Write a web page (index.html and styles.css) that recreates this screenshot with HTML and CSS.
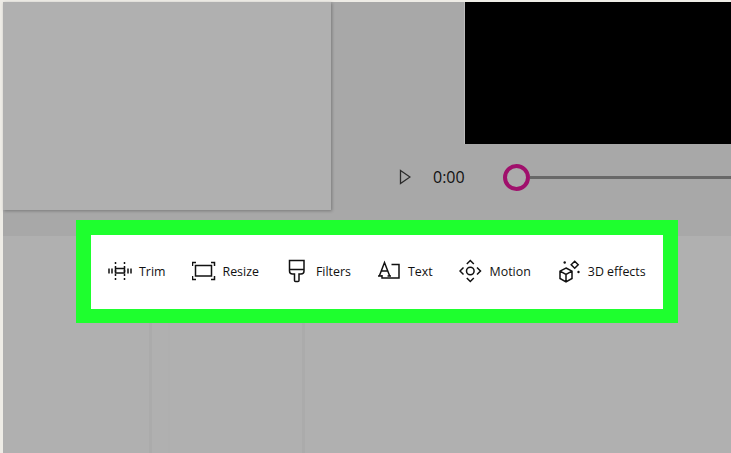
FILE: index.html
```html
<!DOCTYPE html>
<html lang="en">
<head>
<meta charset="utf-8">
<title>Video editor</title>
<link rel="stylesheet" href="styles.css">
</head>
<body>
<main class="app">
  <section class="stage">
    <div class="card"></div>
    <div class="player">
      <div class="video"></div>
      <div class="controls">
        <svg class="play" width="12" height="16" viewBox="0 0 12 16"><path d="M1.500 1.500 11 8 1.500 14.500Z"/></svg>
        <span class="time">0:00</span>
        <div class="slider"><span class="thumb"></span><span class="track"></span></div>
      </div>
    </div>
  </section>
  <section class="timeline">
    <div class="col col-a"></div>
    <div class="col col-b"></div>
    <div class="col col-c"></div>
  </section>
  <nav class="highlight">
    <div class="toolbar">
      <div class="tool">
        <svg class="icon" viewBox="0 0 24 24"><path d="M1 9.500v5M4 9.500v5M20 9.500v5M23 9.500v5M7.500 9.500h9v4.500h-9z"/><path class="dash" d="M7.500 3v18M16.500 3v18"/></svg>
        <span>Trim</span>
      </div>
      <div class="tool">
        <svg class="icon" viewBox="0 0 24 24"><path d="M3.500 6.500h16v10.500h-16zM.5 7V3.500H4M19 3.500h3.500V7M22.500 17v3.500H19M4 20.500H.5V17"/></svg>
        <span>Resize</span>
      </div>
      <div class="tool">
        <svg class="icon" viewBox="0 0 24 24"><path d="M4.500 1.500h14.500v10.500c0 2-1.500 3-3 3h-2v6.500a1 1 0 0 1-1 1h-2.500a1 1 0 0 1-1-1V15h-2c-1.500 0-3-1-3-3zM4.500 10.500h14.500"/></svg>
        <span>Filters</span>
      </div>
      <div class="tool">
        <svg class="icon" viewBox="0 0 24 24"><path d="M2.500 16.500 7.500 3.500 12.500 16.500M4.500 12h6M1 17h3.500M10.500 17h3.500M14.500 5.500h7.500v13.500H5v-3"/></svg>
        <span>Text</span>
      </div>
      <div class="tool">
        <svg class="icon" viewBox="0 0 24 24"><circle cx="11.300" cy="12" r="3.800"/><path d="M4.500 8.500 1 12l3.500 3.500M18 8.500l3.500 3.500-3.500 3.500M7.800 5l3.500-3.500L14.800 5M7.800 19l3.500 3.500 3.500-3.500"/></svg>
        <span>Motion</span>
      </div>
      <div class="tool">
        <svg class="icon" viewBox="0 0 24 24"><path d="M9 9 15 12.200v7.300L9 23l-6-3.500v-7.300zM3 12.200l6 3.300 6-3.300M9 15.500V23M17.700 2.200 21.200 5.700 17.700 9.200 14.200 5.700z"/><circle class="dot" cx="7.700" cy="3.500" r="1.200"/><circle class="dot" cx="21.500" cy="13" r="1.200"/></svg>
        <span>3D effects</span>
      </div>
    </div>
  </nav>
</main>
</body>
</html>
```
FILE: styles.css
```css
* { box-sizing: border-box; }
html, body { margin: 0; height: 100%; }
body { background: #eeece6; overflow: hidden; }
.app {
  position: relative;
  width: 731px;
  height: 453px;
  padding: 2px 0 0 3px;
  font-family: "Open Sans", "Noto Sans", sans-serif;
  color: #111;
  overflow: hidden;
}
.stage { display: flex; height: 234px; background: #a8a8a8; }
.card {
  width: 328px;
  height: 208px;
  flex: none;
  background: #b0b0b0;
  box-shadow: 1px 1px 3px rgba(0, 0, 0, .28);
}
.player { flex: 1; min-width: 0; }
.video {
  height: 142px;
  margin-left: 134px;
  background: #000;
  box-shadow: -1px 0 0 #bdbdbd;
}
.controls { display: flex; align-items: center; height: 66px; padding-left: 68px; }
.play { fill: none; stroke: #2a2a2a; stroke-width: 1.300; flex: none; }
.time { margin-left: 22px; font-size: 16px; line-height: 20px; color: #111; width: 38px; }
.slider { display: flex; align-items: center; flex: 1; margin-left: 32px; }
.thumb {
  width: 27px;
  height: 27px;
  flex: none;
  border: 4px solid #a0106c;
  border-radius: 50%;
  background: #ababab;
}
.track { flex: 1; height: 3px; background: #686868; }
.timeline { display: flex; height: 217px; background: #b0b0b0; }
.col { height: 100%; }
.col-a { width: 146px; }
.col-b {
  width: 153px;
  border-left: 3px solid #ababab;
  background: linear-gradient(90deg, #b0b0b0 0 16px, #afafaf 16px 18px, #b0b0b0 18px);
}
.col-c { flex: 1; border-left: 3px solid #ababab; }
.highlight {
  position: absolute;
  left: 76px;
  top: 220px;
  width: 602px;
  height: 103px;
  padding: 15px;
  background: #1eff2e;
}
.toolbar {
  display: flex;
  align-items: center;
  gap: 26px;
  height: 74px;
  padding: 0 0 2px 17px;
  background: #fff;
  font-size: 12.400px;
  color: #111;
}
.tool { display: flex; align-items: center; gap: 7px; white-space: nowrap; }
.icon {
  width: 24px;
  height: 24px;
  flex: none;
  fill: none;
  stroke: #111;
  stroke-width: 1.500;
}
.dash { stroke-dasharray: 2 2; }
.dot { fill: #111; stroke: none; }
```
